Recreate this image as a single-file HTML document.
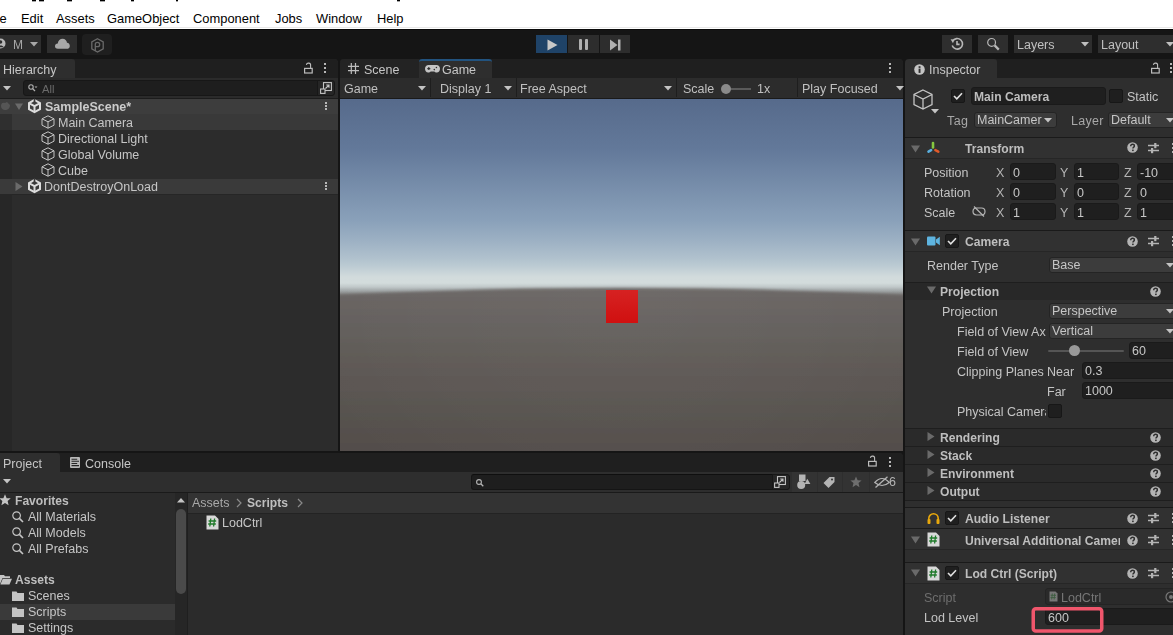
<!DOCTYPE html>
<html><head><meta charset="utf-8">
<style>
*{box-sizing:border-box;margin:0;padding:0}
html,body{width:1173px;height:635px;overflow:hidden;background:#151515;font-family:"Liberation Sans",sans-serif;font-size:12px;color:#c6c6c6}
.a{position:absolute}
.t{position:absolute;white-space:nowrap;line-height:16px;font-size:12.5px;padding-top:1px}
svg{position:absolute;overflow:visible}
#menu{left:0;top:0;width:1173px;height:29px;background:#fff}
#menu .t{color:#000;font-size:12.9px;top:9.5px}
.bk{position:absolute;background:#000;top:0;height:1px;box-shadow:0 1px 0 rgba(0,0,0,.35)}
</style></head><body>
<!-- MENU BAR -->
<div id="menu" class="a">
  <div class="a" style="left:0;top:27px;width:1173px;height:1px;background:#e8e8e8"></div><div class="a" style="left:0;top:29px;width:1173px;height:1px;background:#0a0a0a"></div>
  <div class="bk" style="left:32px;width:4px"></div>
  <div class="bk" style="left:39px;width:5px"></div>
  <div class="bk" style="left:67px;width:5px"></div>
  <div class="bk" style="left:100px;width:5px"></div>
  <div class="bk" style="left:131px;width:3px"></div>
  <div class="bk" style="left:176px;width:2px"></div>
  <div class="bk" style="left:397px;width:3px"></div>
  <div class="t" style="left:-14px">File</div>
  <div class="t" style="left:21px">Edit</div>
  <div class="t" style="left:56px">Assets</div>
  <div class="t" style="left:107px">GameObject</div>
  <div class="t" style="left:193px">Component</div>
  <div class="t" style="left:275px">Jobs</div>
  <div class="t" style="left:316px">Window</div>
  <div class="t" style="left:377px">Help</div>
</div>
<div id="ui" style="position:absolute;left:0;top:0;width:1173px;height:635px;will-change:transform">
<!-- TOOLBAR -->
<div class="a" style="left:0;top:35px;width:41px;height:18px;background:#2e2e2e"></div>
<svg style="left:-5px;top:38px" width="11" height="11" viewBox="0 0 11 11"><circle cx="5.5" cy="5.5" r="5" fill="#b8b8b8"/><circle cx="5.5" cy="4" r="1.8" fill="#2e2e2e"/><path d="M2.3 9.2 C3 7 8 7 8.7 9.2" fill="#2e2e2e"/></svg>
<div class="t" style="left:13px;top:36px;color:#a8a8a8;font-size:12px">M</div>
<svg style="left:30px;top:42px" width="8" height="5"><path d="M0 0H8L4 4.5Z" fill="#a8a8a8"/></svg>
<div class="a" style="left:47px;top:35px;width:30px;height:18px;background:#2e2e2e"></div>
<svg style="left:55px;top:38px" width="15" height="11" viewBox="0 0 15 11"><path d="M3 10.8 C0.8 10.8 0 9.4 0 8.2 C0 6.6 1.3 5.5 2.8 5.6 C3 2.6 5.2 0.8 7.6 0.8 C10 0.8 11.8 2.6 12 4.8 C13.8 5 14.8 6.4 14.8 7.9 C14.8 9.6 13.6 10.8 11.8 10.8Z" fill="#a8a8a8"/></svg>
<div class="a" style="left:82px;top:34px;width:30px;height:21px;background:#1f1f1f;border-radius:4px"></div>
<svg style="left:91px;top:38px" width="13" height="15" viewBox="0 0 13 15"><path d="M6.5 0.8 L12.2 4 V10.8 L6.5 14 L0.8 10.8 V4 Z" fill="none" stroke="#6a6a6a" stroke-width="1.3"/><path d="M4.3 13 V6.2 C4.3 5 5.3 4.3 6.5 4.3 C7.8 4.3 8.7 5.2 8.7 6.5 C8.7 7.8 7.8 8.7 6.5 8.7 H4.3" fill="none" stroke="#6a6a6a" stroke-width="1.3"/></svg>

<div class="a" style="left:536px;top:35px;width:31px;height:18px;background:#1f4368"></div>
<svg style="left:547px;top:39px" width="11" height="12"><path d="M0.5 0.5 L10.5 6 L0.5 11.5Z" fill="#c8c8c8"/></svg>
<div class="a" style="left:568px;top:35px;width:31px;height:18px;background:#2d2d2d"></div>
<div class="a" style="left:579px;top:39px;width:3px;height:11px;background:#b0b0b0;border-radius:1px"></div>
<div class="a" style="left:585px;top:39px;width:3px;height:11px;background:#b0b0b0;border-radius:1px"></div>
<div class="a" style="left:600px;top:35px;width:30px;height:18px;background:#2d2d2d"></div>
<svg style="left:610px;top:39px" width="11" height="12"><path d="M0 0.5 L7.5 6 L0 11.5Z" fill="#b0b0b0"/><rect x="8" y="0.5" width="2.5" height="11" fill="#b0b0b0"/></svg>

<div class="a" style="left:942px;top:35px;width:30px;height:18px;background:#2e2e2e"></div>
<svg style="left:950px;top:37px" width="14" height="14" viewBox="0 0 14 14"><path d="M2.6 4.2 A5.3 5.3 0 1 1 2.2 8.6" fill="none" stroke="#b8b8b8" stroke-width="1.6"/><path d="M0.6 2.2 L4.4 2.4 L3 6.2 Z" fill="#b8b8b8"/><path d="M7 4 V7.4 H9.6" fill="none" stroke="#b8b8b8" stroke-width="1.6"/></svg>
<div class="a" style="left:978px;top:35px;width:30px;height:18px;background:#2e2e2e"></div>
<svg style="left:987px;top:38px" width="13" height="13" viewBox="0 0 13 13"><circle cx="4.6" cy="4.4" r="3.9" fill="none" stroke="#b8b8b8" stroke-width="1.2"/><path d="M7.6 7.4 L11.8 11.6" stroke="#b8b8b8" stroke-width="2.2"/></svg>
<div class="a" style="left:1014px;top:35px;width:78px;height:18px;background:#2e2e2e"></div>
<div class="t" style="left:1017px;top:36px;color:#c0c0c0">Layers</div>
<svg style="left:1081px;top:42px" width="8" height="5"><path d="M0 0H8L4 4.5Z" fill="#c0c0c0"/></svg>
<div class="a" style="left:1098px;top:35px;width:80px;height:18px;background:#2e2e2e"></div>
<div class="t" style="left:1101px;top:36px;color:#c0c0c0">Layout</div>
<svg style="left:1166px;top:42px" width="8" height="5"><path d="M0 0H8L4 4.5Z" fill="#c0c0c0"/></svg>
<!-- HIERARCHY -->
<div class="a" style="left:0;top:59px;width:338px;height:392px;background:#2c2c2c;border-radius:0 4px 0 0;overflow:hidden">
  <div class="a" style="left:0;top:0;width:338px;height:19px;background:#1f1f1f"></div>
  <div class="a" style="left:0;top:0;width:75px;height:19px;background:#2e2e2e;border-radius:0 3px 0 0"></div>
  <div class="t" style="left:3px;top:2px;color:#c6c6c6">Hierarchy</div>
  <div class="a" style="left:0;top:19px;width:338px;height:20px;background:#2b2b2b"></div>
</div>
<svg style="left:304px;top:63px" width="9" height="11" viewBox="0 0 9 11"><path d="M6.6 5 V2.6 A2.1 2.1 0 0 0 2.4 1.9" fill="none" stroke="#bcbcbc" stroke-width="1.1"/><rect x="0.6" y="5.4" width="7.6" height="4.6" fill="none" stroke="#bcbcbc" stroke-width="1.2"/></svg>
<div class="a" style="left:324px;top:63px;width:2px;height:2px;background:#b8b8b8;box-shadow:0 4px 0 #b8b8b8,0 8px 0 #b8b8b8"></div>
<svg style="left:3px;top:86px" width="8" height="5"><path d="M0 0H8L4 4.5Z" fill="#c4c4c4"/></svg>
<div class="a" style="left:23px;top:80px;width:295px;height:16px;background:#1e1e1e;border:1px solid #171717;border-radius:3px 0 0 3px"></div>
<svg style="left:28px;top:84px" width="10" height="9" viewBox="0 0 10 9"><circle cx="3" cy="3" r="2.2" fill="none" stroke="#b0b0b0" stroke-width="1.1"/><path d="M4.6 4.6 L7 7" stroke="#b0b0b0" stroke-width="1.3"/><path d="M6.5 2.5 H9.5 L8 4Z" fill="#b0b0b0"/></svg>
<div class="t" style="left:42px;top:80px;color:#6a6a6a;font-size:11.2px">All</div>
<div class="a" style="left:317px;top:80px;width:18px;height:16px;background:#262626;border:1px solid #171717;border-radius:0 3px 3px 0"></div>
<svg style="left:320px;top:82px" width="12" height="12" viewBox="0 0 12 12"><rect x="3.5" y="0.6" width="7.9" height="7.9" fill="none" stroke="#c4c4c4" stroke-width="1.1"/><rect x="0.6" y="7" width="4.4" height="4.4" fill="#262626" stroke="#c4c4c4" stroke-width="1.1"/><path d="M5.5 6.5 L9 3 M6.2 3 H9 V5.8" fill="none" stroke="#c4c4c4" stroke-width="1.1"/></svg>
<!-- rows -->
<div class="a" style="left:0;top:98px;width:338px;height:1px;background:#1c1c1c"></div><div class="a" style="left:0;top:99px;width:338px;height:15px;background:#3d3d3d"></div>
<div class="a" style="left:0;top:114px;width:12px;height:65px;background:#272727"></div><div class="a" style="left:0;top:114px;width:12px;height:16px;background:#2f2f2f"></div>
<div class="a" style="left:12px;top:114px;width:326px;height:16px;background:#393939"></div><div class="a" style="left:0;top:194px;width:338px;height:1px;background:#262626"></div>
<div class="a" style="left:0;top:179px;width:338px;height:15px;background:#3a3a3a"></div>
<div class="a" style="left:0;top:194px;width:12px;height:257px;background:#272727"></div>

<svg style="left:0px;top:101px" width="11" height="10" viewBox="0 0 11 10"><path d="M1 5 C1 2 3 1 5 2 L7 1 L10 4 C10 7 8 9 5 9 C3 9 1 7.5 1 5Z" fill="#555"/></svg>
<svg style="left:15px;top:103px" width="8" height="8"><path d="M0 0.5H8L4 7Z" fill="#6a6a6a"/></svg>
<svg style="left:28px;top:99px" width="13" height="14" viewBox="0 0 13 14"><path d="M6.5 1 L12 4.1 V10.2 L6.5 13.2 L1 10.2 V4.1Z" fill="none" stroke="#dcdcdc" stroke-width="2"/><path d="M6.5 7.2 V13 M6.5 7.2 L1.8 4.6 M6.5 7.2 L11.2 4.6" stroke="#dcdcdc" stroke-width="2"/><rect x="5.7" y="0" width="1.6" height="3.6" fill="#3a3a3a"/></svg>
<div class="t" style="left:45px;top:98px;font-weight:bold;color:#cccccc">SampleScene*</div>
<div class="a" style="left:325px;top:102px;width:2px;height:2px;background:#b8b8b8;box-shadow:0 3px 0 #b8b8b8,0 6px 0 #b8b8b8"></div>
<svg style="left:41px;top:115px" width="14" height="14" viewBox="0 0 14 14"><path d="M7 0.8 L13 3.8 V10.2 L7 13.2 L1 10.2 V3.8Z M1 3.8 L7 6.8 L13 3.8 M7 6.8 V13.2" fill="none" stroke="#c4c4c4" stroke-width="1"/></svg><div class="t" style="left:58px;top:114px;color:#c6c6c6">Main Camera</div>
<svg style="left:41px;top:131px" width="14" height="14" viewBox="0 0 14 14"><path d="M7 0.8 L13 3.8 V10.2 L7 13.2 L1 10.2 V3.8Z M1 3.8 L7 6.8 L13 3.8 M7 6.8 V13.2" fill="none" stroke="#c4c4c4" stroke-width="1"/></svg><div class="t" style="left:58px;top:130px;color:#c6c6c6">Directional Light</div>
<svg style="left:41px;top:147px" width="14" height="14" viewBox="0 0 14 14"><path d="M7 0.8 L13 3.8 V10.2 L7 13.2 L1 10.2 V3.8Z M1 3.8 L7 6.8 L13 3.8 M7 6.8 V13.2" fill="none" stroke="#c4c4c4" stroke-width="1"/></svg><div class="t" style="left:58px;top:146px;color:#c6c6c6">Global Volume</div>
<svg style="left:41px;top:163px" width="14" height="14" viewBox="0 0 14 14"><path d="M7 0.8 L13 3.8 V10.2 L7 13.2 L1 10.2 V3.8Z M1 3.8 L7 6.8 L13 3.8 M7 6.8 V13.2" fill="none" stroke="#c4c4c4" stroke-width="1"/></svg><div class="t" style="left:58px;top:162px;color:#c6c6c6">Cube</div>
<svg style="left:15px;top:182px" width="8" height="9"><path d="M0.5 0V9L7.5 4.5Z" fill="#6a6a6a"/></svg>
<svg style="left:28px;top:179px" width="13" height="14" viewBox="0 0 13 14"><path d="M6.5 1 L12 4.1 V10.2 L6.5 13.2 L1 10.2 V4.1Z" fill="none" stroke="#dcdcdc" stroke-width="2"/><path d="M6.5 7.2 V13 M6.5 7.2 L1.8 4.6 M6.5 7.2 L11.2 4.6" stroke="#dcdcdc" stroke-width="2"/><rect x="5.7" y="0" width="1.6" height="3.6" fill="#3a3a3a"/></svg>
<div class="t" style="left:44px;top:178px;color:#c6c6c6">DontDestroyOnLoad</div>
<div class="a" style="left:325px;top:182px;width:2px;height:2px;background:#b8b8b8;box-shadow:0 3px 0 #b8b8b8,0 6px 0 #b8b8b8"></div>
<!-- SCENE/GAME -->
<div class="a" style="left:340px;top:59px;width:563px;height:392px;background:#2b2b2b;border-radius:4px 4px 0 0;overflow:hidden">
  <div class="a" style="left:0;top:0;width:563px;height:19px;background:#1f1f1f"></div>
  <div class="a" style="left:0;top:0;width:79px;height:19px;background:#232323"></div>
  <div class="a" style="left:79px;top:0;width:73px;height:19px;background:#2e2e2e;border-top:2px solid #22537f;border-radius:3px 3px 0 0"></div>
  <div class="a" style="left:0;top:19px;width:563px;height:21px;background:#2c2c2c;border-bottom:1px solid #1a1a1a"></div>
  <div class="a" style="left:90px;top:19px;width:1px;height:19px;background:#1e1e1e"></div>
  <div class="a" style="left:176px;top:19px;width:1px;height:19px;background:#1e1e1e"></div>
  <div class="a" style="left:336px;top:19px;width:1px;height:19px;background:#1e1e1e"></div>
  <div class="a" style="left:457px;top:19px;width:1px;height:19px;background:#1e1e1e"></div>
</div>
<svg style="left:348px;top:63px" width="11" height="11" viewBox="0 0 11 11"><path d="M3.3 0 V11 M7.5 0 V11 M0 3.3 H11 M0 7.7 H11" stroke="#bcbcbc" stroke-width="1.2"/></svg>
<div class="t" style="left:364px;top:61px;color:#c6c6c6">Scene</div>
<svg style="left:425px;top:65px" width="15" height="8" viewBox="0 0 15 8"><path d="M3.6 0 H11.4 C13.5 0 15 1.6 15 3.8 C15 6.2 13.6 7.6 11.8 7.6 C10.6 7.6 9.9 6.9 9.4 6.4 H5.6 C5.1 6.9 4.4 7.6 3.2 7.6 C1.4 7.6 0 6.2 0 3.8 C0 1.6 1.5 0 3.6 0Z" fill="#c4c4c4"/><path d="M2.3 3.6 H5.3 M3.8 2.1 V5.1" stroke="#2e2e2e" stroke-width="1.1"/><circle cx="11.4" cy="2.5" r="0.8" fill="#2e2e2e"/><circle cx="9.3" cy="4.6" r="0.8" fill="#2e2e2e"/></svg>
<div class="t" style="left:442px;top:61px;color:#c6c6c6">Game</div>
<div class="a" style="left:889px;top:63px;width:2px;height:2px;background:#b8b8b8;box-shadow:0 4px 0 #b8b8b8,0 8px 0 #b8b8b8"></div>
<div class="t" style="left:344px;top:80px;color:#c0c0c0">Game</div>
<svg style="left:418px;top:86px" width="8" height="5"><path d="M0 0H8L4 4.5Z" fill="#c4c4c4"/></svg>
<div class="t" style="left:440px;top:80px;color:#c0c0c0">Display 1</div>
<svg style="left:504px;top:86px" width="8" height="5"><path d="M0 0H8L4 4.5Z" fill="#c4c4c4"/></svg>
<div class="t" style="left:520px;top:80px;color:#c0c0c0">Free Aspect</div>
<svg style="left:664px;top:86px" width="8" height="5"><path d="M0 0H8L4 4.5Z" fill="#c4c4c4"/></svg>
<div class="t" style="left:683px;top:80px;color:#c0c0c0">Scale</div>
<div class="a" style="left:726px;top:88px;width:25px;height:2px;background:#5a5a5a"></div>
<div class="a" style="left:721px;top:84px;width:10px;height:10px;border-radius:50%;background:#8a8a8a"></div>
<div class="t" style="left:757px;top:80px;color:#c0c0c0">1x</div>
<div class="t" style="left:802px;top:80px;color:#c0c0c0">Play Focused</div>
<svg style="left:896px;top:86px" width="8" height="5"><path d="M0 0H8L4 4.5Z" fill="#c4c4c4"/></svg>
<svg style="left:340px;top:99px;overflow:hidden" width="563" height="352" viewBox="0 1 563 352" preserveAspectRatio="none">
<defs>
<linearGradient id="sky" gradientUnits="userSpaceOnUse" x1="0" y1="0" x2="0" y2="353"><stop offset="0.0000" stop-color="#566a8b"/><stop offset="0.1473" stop-color="#63799a"/><stop offset="0.3484" stop-color="#8aa1ba"/><stop offset="0.4051" stop-color="#9db1c4"/><stop offset="0.4533" stop-color="#b0c1cd"/><stop offset="0.4759" stop-color="#bccbd3"/><stop offset="0.4929" stop-color="#c8d4d8"/><stop offset="0.5071" stop-color="#d2dbdc"/><stop offset="0.5241" stop-color="#d3dcdc"/><stop offset="0.5354" stop-color="#c0c8c9"/><stop offset="0.5467" stop-color="#9fa4a5"/><stop offset="0.5581" stop-color="#7c7a79"/><stop offset="0.5694" stop-color="#686462"/><stop offset="0.7705" stop-color="#5d5854"/><stop offset="1.0000" stop-color="#524d4a"/></linearGradient>
<linearGradient id="gnd" x1="0" y1="0" x2="0" y2="1"><stop offset="0.0000" stop-color="#6a6664"/><stop offset="0.0455" stop-color="#686462"/><stop offset="0.3682" stop-color="#5d5854"/><stop offset="0.7364" stop-color="#524d4a"/></linearGradient>
<filter id="bl" x="-10%" y="-10%" width="120%" height="120%"><feGaussianBlur stdDeviation="1.6"/></filter>
</defs>
<rect x="0" y="0" width="563" height="353" fill="url(#sky)"/>
<ellipse cx="280" cy="302" rx="800" ry="112" fill="url(#gnd)" filter="url(#bl)"/><radialGradient id="rg" gradientUnits="userSpaceOnUse" cx="280" cy="200" r="330" gradientTransform="translate(280 200) scale(1 0.75) translate(-280 -200)"><stop offset="0" stop-color="#fff" stop-opacity="0.035"/><stop offset="0.6" stop-color="#fff" stop-opacity="0.018"/><stop offset="1" stop-color="#fff" stop-opacity="0"/></radialGradient><rect x="0" y="192" width="563" height="162" fill="url(#rg)"/>
</svg>
<div class="a" style="left:606px;top:290px;width:32px;height:33px;background:linear-gradient(#d62222,#d01010)"></div>
<!-- PROJECT -->
<div class="a" style="left:0;top:453px;width:903px;height:182px;background:#2b2b2b;border-radius:0 4px 0 0;overflow:hidden"><div class="a" style="left:0;top:0;width:903px;height:19px;background:#1f1f1f"></div><div class="a" style="left:0;top:0;width:60px;height:19px;background:#2e2e2e;border-radius:0 3px 0 0"></div><div class="a" style="left:0;top:19px;width:903px;height:21px;background:#2e2e2e;border-bottom:1px solid #1a1a1a"></div></div>
<div class="t" style="left:3px;top:455px;color:#c6c6c6">Project</div>
<svg style="left:70px;top:457px" width="10" height="11" viewBox="0 0 10 11"><rect x="0" y="0" width="10" height="11" rx="1" fill="#b8b8b8"/><path d="M1.5 2.2 H7.2 M1.5 4.3 H9 M1.5 6.5 H7.2 M1.5 8.6 H9" stroke="#262626" stroke-width="1.1"/></svg>
<div class="t" style="left:85px;top:455px;color:#c6c6c6">Console</div>
<svg style="left:3px;top:479px" width="8" height="5"><path d="M0 0H8L4 4.5Z" fill="#c4c4c4"/></svg>
<svg style="left:868px;top:456px" width="9" height="11" viewBox="0 0 9 11"><path d="M6.6 5 V2.6 A2.1 2.1 0 0 0 2.4 1.9" fill="none" stroke="#bcbcbc" stroke-width="1.1"/><rect x="0.6" y="5.4" width="7.6" height="4.6" fill="none" stroke="#bcbcbc" stroke-width="1.2"/></svg>
<div class="a" style="left:889px;top:457px;width:2px;height:2px;background:#b8b8b8;box-shadow:0 4px 0 #b8b8b8,0 8px 0 #b8b8b8"></div>
<div class="a" style="left:471px;top:474px;width:317px;height:16px;background:#1e1e1e;border:1px solid #151515;border-top-color:#0f0f0f;border-radius:3px 0 0 3px"></div>
<svg style="left:476px;top:479px" width="8" height="8" viewBox="0 0 8 8"><circle cx="3" cy="3" r="2.4" fill="none" stroke="#b4b4b4" stroke-width="1.1"/><path d="M4.8 4.8 L7.3 7.3" stroke="#b4b4b4" stroke-width="1.3"/></svg>
<div class="a" style="left:772px;top:474px;width:18px;height:16px;background:#262626;border:1px solid #171717;border-radius:0 3px 3px 0"></div>
<svg style="left:774px;top:476px" width="12" height="12" viewBox="0 0 12 12"><rect x="3.5" y="0.6" width="7.9" height="7.9" fill="none" stroke="#c4c4c4" stroke-width="1.1"/><rect x="0.6" y="7" width="4.4" height="4.4" fill="#262626" stroke="#c4c4c4" stroke-width="1.1"/><path d="M5.5 6.5 L9 3 M6.2 3 H9 V5.8" fill="none" stroke="#c4c4c4" stroke-width="1.1"/></svg>
<div class="a" style="left:792px;top:472px;width:25px;height:20px;background:#333333"></div>
<div class="a" style="left:818px;top:472px;width:24px;height:20px;background:#333333"></div>
<div class="a" style="left:843px;top:472px;width:26px;height:20px;background:#333333"></div>
<div class="a" style="left:870px;top:472px;width:33px;height:20px;background:#333333"></div>
<svg style="left:797px;top:474px" width="14" height="16" viewBox="0 0 14 16"><rect x="2" y="0.5" width="6.5" height="6.5" fill="#b4b4b4"/><circle cx="4.2" cy="11" r="4" fill="#b4b4b4"/><path d="M7.6 10 L10.3 4.8 L13.4 10Z" fill="#b4b4b4"/></svg>
<svg style="left:823px;top:476px" width="13" height="12" viewBox="0 0 13 12"><path d="M0.5 7 L6.5 1 H11.5 V6 L5.5 12Z" fill="#b4b4b4"/><circle cx="9" cy="3.5" r="1" fill="#333"/></svg>
<svg style="left:850px;top:476px" width="12" height="12" viewBox="0 0 12 12"><path d="M6 0.5 L7.6 4.2 L11.6 4.5 L8.5 7.1 L9.5 11.2 L6 9 L2.5 11.2 L3.5 7.1 L0.4 4.5 L4.4 4.2Z" fill="#6e6e6e"/></svg>
<svg style="left:874px;top:476px" width="16" height="12" viewBox="0 0 16 12"><path d="M0.8 6.5 Q8 -1.5 15.2 6.5 Q8 12.5 0.8 6.5Z" fill="none" stroke="#b4b4b4" stroke-width="1.2"/><path d="M1.5 11.5 L13.5 0.8" stroke="#b4b4b4" stroke-width="1.3"/></svg>
<div class="t" style="left:889px;top:473px;color:#b4b4b4">6</div>
<div class="a" style="left:903px;top:453px;width:2px;height:182px;background:#151515"></div>
<svg style="left:-1px;top:494px" width="12" height="12" viewBox="0 0 11 11"><path d="M5.5 0.3 L7 3.8 L10.8 4 L7.9 6.5 L8.8 10.4 L5.5 8.3 L2.2 10.4 L3.1 6.5 L0.2 4 L4 3.8Z" fill="#c4c4c4"/></svg>
<div class="t" style="left:15px;top:492px;color:#bebebe;font-weight:bold;font-size:12.1px">Favorites</div>
<svg style="left:12px;top:511px" width="12" height="12" viewBox="0 0 12 12"><circle cx="4.6" cy="4.6" r="3.8" fill="none" stroke="#c4c4c4" stroke-width="1.2"/><path d="M7.4 7.4 L11 11" stroke="#c4c4c4" stroke-width="1.6"/></svg><div class="t" style="left:28px;top:508px;color:#c6c6c6">All Materials</div>
<svg style="left:12px;top:527px" width="12" height="12" viewBox="0 0 12 12"><circle cx="4.6" cy="4.6" r="3.8" fill="none" stroke="#c4c4c4" stroke-width="1.2"/><path d="M7.4 7.4 L11 11" stroke="#c4c4c4" stroke-width="1.6"/></svg><div class="t" style="left:28px;top:524px;color:#c6c6c6">All Models</div>
<svg style="left:12px;top:543px" width="12" height="12" viewBox="0 0 12 12"><circle cx="4.6" cy="4.6" r="3.8" fill="none" stroke="#c4c4c4" stroke-width="1.2"/><path d="M7.4 7.4 L11 11" stroke="#c4c4c4" stroke-width="1.6"/></svg><div class="t" style="left:28px;top:540px;color:#c6c6c6">All Prefabs</div>
<div class="a" style="left:0;top:604px;width:175px;height:16px;background:#3a3a3a"></div>
<svg style="left:0px;top:574px" width="12" height="11" viewBox="0 0 12 11"><path d="M0 1 H4 L5 2.3 H10 V4 H2.5 L0 10Z" fill="#c4c4c4"/><path d="M2.8 4.8 H12 L9.5 10.5 H0.4Z" fill="#c4c4c4"/></svg>
<div class="t" style="left:15px;top:571px;color:#bebebe;font-weight:bold;font-size:12.1px">Assets</div>
<svg style="left:12px;top:591px" width="12" height="10" viewBox="0 0 12 10"><path d="M0 0.5 H4.5 L5.5 2 H12 V10 H0Z" fill="#c4c4c4"/></svg><div class="t" style="left:28px;top:587px;color:#c6c6c6">Scenes</div>
<svg style="left:12px;top:607px" width="12" height="10" viewBox="0 0 12 10"><path d="M0 0.5 H4.5 L5.5 2 H12 V10 H0Z" fill="#c4c4c4"/></svg><div class="t" style="left:28px;top:603px;color:#c6c6c6">Scripts</div>
<svg style="left:12px;top:623px" width="12" height="10" viewBox="0 0 12 10"><path d="M0 0.5 H4.5 L5.5 2 H12 V10 H0Z" fill="#c4c4c4"/></svg><div class="t" style="left:28px;top:619px;color:#c6c6c6">Settings</div>
<div class="a" style="left:175px;top:493px;width:12px;height:142px;background:#262626"></div>
<svg style="left:177px;top:498px" width="8" height="5"><path d="M0 4.5H8L4 0Z" fill="#c4c4c4"/></svg>
<div class="a" style="left:176px;top:509px;width:10px;height:85px;background:#4a4a4a;border-radius:5px"></div>
<div class="a" style="left:187px;top:493px;width:1px;height:142px;background:#1f1f1f"></div>
<div class="a" style="left:188px;top:493px;width:715px;height:21px;background:#333333;border-bottom:1px solid #232323"></div>
<div class="t" style="left:192px;top:494px;color:#a8a8a8">Assets</div>
<svg style="left:236px;top:498px" width="6" height="10"><path d="M1 1 L5 5 L1 9" fill="none" stroke="#8a8a8a" stroke-width="1.2"/></svg>
<div class="t" style="left:247px;top:494px;color:#bebebe;font-weight:bold;font-size:12.1px">Scripts</div>
<svg style="left:297px;top:498px" width="6" height="10"><path d="M1 1 L5 5 L1 9" fill="none" stroke="#8a8a8a" stroke-width="1.2"/></svg>
<svg style="left:206px;top:515px" width="13" height="15" viewBox="0 0 13 15"><path d="M0.5 0.5 H9 L12.5 4 V14.5 H0.5Z" fill="#d8d8d8"/><path d="M4.8 3.5 L3.8 11.5 M8.6 3.5 L7.6 11.5 M2.6 6 H10.2 M2.2 9 H9.8" stroke="#1f7a2a" stroke-width="1.3"/></svg>
<div class="t" style="left:222px;top:514px;color:#c6c6c6">LodCtrl</div>
<!-- INSPECTOR -->
<svg style="left:1170px;top:93px" width="8" height="5"><path d="M0 0H8L4 4.5Z" fill="#c4c4c4"/></svg>
<div class="a" style="left:905px;top:59px;width:268px;height:576px;background:#2e2e2e;border-radius:4px 0 0 0;overflow:hidden"><div class="a" style="left:0;top:0;width:268px;height:19px;background:#1f1f1f"></div><div class="a" style="left:0;top:0;width:92px;height:19px;background:#2e2e2e;border-radius:4px 3px 0 0"></div></div>
<svg style="left:914px;top:64px" width="11" height="11" viewBox="0 0 11 11"><circle cx="5.5" cy="5.5" r="5.3" fill="#c4c4c4"/><rect x="4.6" y="4.6" width="1.9" height="4.3" fill="#2e2e2e"/><rect x="4.6" y="2.2" width="1.9" height="1.7" fill="#2e2e2e"/></svg>
<div class="t" style="left:929px;top:61px;color:#c6c6c6">Inspector</div>
<svg style="left:1151px;top:63px" width="9" height="11" viewBox="0 0 9 11"><path d="M6.6 5 V2.6 A2.1 2.1 0 0 0 2.4 1.9" fill="none" stroke="#bcbcbc" stroke-width="1.1"/><rect x="0.6" y="5.4" width="7.6" height="4.6" fill="none" stroke="#bcbcbc" stroke-width="1.2"/></svg>
<div class="a" style="left:1170px;top:63px;width:2px;height:2px;background:#b8b8b8;box-shadow:0 4px 0 #b8b8b8,0 8px 0 #b8b8b8"></div>
<svg style="left:913px;top:89px" width="20" height="21" viewBox="0 0 20 21"><path d="M10 1 L19 5.5 V15.5 L10 20 L1 15.5 V5.5Z M1 5.5 L10 10 L19 5.5 M10 10 V20" fill="none" stroke="#c4c4c4" stroke-width="1.3"/></svg><svg style="left:931px;top:109px" width="8" height="5"><path d="M0 0H8L4 4.5Z" fill="#c4c4c4"/></svg>
<div class="a" style="left:951px;top:89px;width:14px;height:14px;background:#1f1f1f;border:1px solid #171717;border-radius:2px"></div><svg style="left:953px;top:92px" width="10" height="8"><path d="M1 4 L3.8 6.8 L9 1.2" fill="none" stroke="#e0e0e0" stroke-width="1.6"/></svg>
<div class="a" style="left:971px;top:87px;width:135px;height:18px;background:#1f1f1f;border:1px solid #1a1a1a;border-radius:3px"></div>
<div class="t" style="left:974px;top:88px;color:#bebebe;font-weight:bold;font-size:12.1px">Main Camera</div>
<div class="a" style="left:1109px;top:89px;width:14px;height:14px;background:#1f1f1f;border:1px solid #171717;border-radius:2px"></div>
<div class="t" style="left:1127px;top:88px;color:#c4c4c4">Static</div>
<div class="t" style="left:947px;top:112px;color:#a8a8a8;letter-spacing:0.4px">Tag</div>
<div class="a" style="left:974px;top:112px;width:83px;height:16px;background:#3c3c3c;border:1px solid #242424;border-radius:3px"></div><div class="t" style="left:977px;top:111px;color:#c6c6c6">MainCamer</div><svg style="left:1044px;top:118px" width="8" height="5"><path d="M0 0H8L4 4.5Z" fill="#c4c4c4"/></svg>
<div class="t" style="left:1071px;top:112px;color:#a8a8a8;letter-spacing:0.3px">Layer</div>
<div class="a" style="left:1108px;top:112px;width:80px;height:16px;background:#3c3c3c;border:1px solid #242424;border-radius:3px"></div><div class="t" style="left:1111px;top:111px;color:#c6c6c6">Default</div><svg style="left:1166px;top:118px" width="8" height="5"><path d="M0 0H8L4 4.5Z" fill="#c4c4c4"/></svg>
<div class="a" style="left:905px;top:137px;width:268px;height:1px;background:#1a1a1a"></div><div class="a" style="left:905px;top:138px;width:268px;height:20px;background:#313131"></div><div class="a" style="left:905px;top:158px;width:268px;height:1px;background:#262626"></div>
<svg style="left:911px;top:145px" width="9" height="8"><path d="M0 0.5H9L4.5 7.5Z" fill="#6a6a6a"/></svg>
<svg style="left:927px;top:141px" width="14" height="13" viewBox="0 0 14 13"><path d="M6 2 V6.4" stroke="#86c840" stroke-width="2.6" stroke-linecap="round"/><path d="M4.1 9.1 L1.5 10.6" stroke="#5ab0e0" stroke-width="2.6" stroke-linecap="round"/><path d="M8.4 9.1 L11.3 10.6" stroke="#e05a2a" stroke-width="2.6" stroke-linecap="round"/></svg>
<div class="t" style="left:965px;top:140px;color:#bebebe;font-weight:bold;font-size:12.1px">Transform</div>
<svg style="left:1127px;top:142px" width="11" height="11" viewBox="0 0 11 11"><circle cx="5.5" cy="5.5" r="5.3" fill="#b4b4b4"/><path d="M3.7 4.2 C3.7 2.9 4.5 2.3 5.5 2.3 C6.6 2.3 7.4 3 7.4 3.9 C7.4 5.1 5.9 5.2 5.9 6.6" fill="none" stroke="#2e2e2e" stroke-width="1.4"/><rect x="5.1" y="7.6" width="1.6" height="1.5" fill="#2e2e2e"/></svg><svg style="left:1148px;top:143px" width="11" height="11" viewBox="0 0 11 11"><path d="M0 2.6 H11 M0 7.6 H11" stroke="#b4b4b4" stroke-width="1.5"/><rect x="6.2" y="0" width="2.2" height="5.2" fill="#b4b4b4"/><rect x="3" y="5" width="2.2" height="5.2" fill="#b4b4b4"/></svg><div class="a" style="left:1172px;top:143px;width:2px;height:2px;background:#b4b4b4;box-shadow:0 4px 0 #b4b4b4,0 8px 0 #b4b4b4"></div>
<div class="t" style="left:924px;top:164px;color:#c4c4c4">Position</div>
<div class="t" style="left:996px;top:164px;color:#b4b4b4">X</div><div class="a" style="left:1010px;top:163px;width:46px;height:17px;background:#1f1f1f;border:1px solid #1a1a1a;border-radius:3px"></div><div class="t" style="left:1013px;top:164px;color:#c6c6c6">0</div>
<div class="t" style="left:1060px;top:164px;color:#b4b4b4">Y</div><div class="a" style="left:1074px;top:163px;width:45px;height:17px;background:#1f1f1f;border:1px solid #1a1a1a;border-radius:3px"></div><div class="t" style="left:1077px;top:164px;color:#c6c6c6">1</div>
<div class="t" style="left:1124px;top:164px;color:#b4b4b4">Z</div><div class="a" style="left:1137px;top:163px;width:50px;height:17px;background:#1f1f1f;border:1px solid #1a1a1a;border-radius:3px"></div><div class="t" style="left:1140px;top:164px;color:#c6c6c6">-10</div>
<div class="t" style="left:924px;top:184px;color:#c4c4c4">Rotation</div>
<div class="t" style="left:996px;top:184px;color:#b4b4b4">X</div><div class="a" style="left:1010px;top:183px;width:46px;height:17px;background:#1f1f1f;border:1px solid #1a1a1a;border-radius:3px"></div><div class="t" style="left:1013px;top:184px;color:#c6c6c6">0</div>
<div class="t" style="left:1060px;top:184px;color:#b4b4b4">Y</div><div class="a" style="left:1074px;top:183px;width:45px;height:17px;background:#1f1f1f;border:1px solid #1a1a1a;border-radius:3px"></div><div class="t" style="left:1077px;top:184px;color:#c6c6c6">0</div>
<div class="t" style="left:1124px;top:184px;color:#b4b4b4">Z</div><div class="a" style="left:1137px;top:183px;width:50px;height:17px;background:#1f1f1f;border:1px solid #1a1a1a;border-radius:3px"></div><div class="t" style="left:1140px;top:184px;color:#c6c6c6">0</div>
<div class="t" style="left:924px;top:204px;color:#c4c4c4">Scale</div>
<div class="t" style="left:996px;top:204px;color:#b4b4b4">X</div><div class="a" style="left:1010px;top:203px;width:46px;height:17px;background:#1f1f1f;border:1px solid #1a1a1a;border-radius:3px"></div><div class="t" style="left:1013px;top:204px;color:#c6c6c6">1</div>
<div class="t" style="left:1060px;top:204px;color:#b4b4b4">Y</div><div class="a" style="left:1074px;top:203px;width:45px;height:17px;background:#1f1f1f;border:1px solid #1a1a1a;border-radius:3px"></div><div class="t" style="left:1077px;top:204px;color:#c6c6c6">1</div>
<div class="t" style="left:1124px;top:204px;color:#b4b4b4">Z</div><div class="a" style="left:1137px;top:203px;width:50px;height:17px;background:#1f1f1f;border:1px solid #1a1a1a;border-radius:3px"></div><div class="t" style="left:1140px;top:204px;color:#c6c6c6">1</div>
<svg style="left:972px;top:206px" width="14" height="11" viewBox="0 0 14 11"><path d="M4.5 2 H9.5 C11.5 2 13 3.5 13 5.5 C13 7.5 11.5 9 9.5 9 H4.5 C2.5 9 1 7.5 1 5.5 C1 3.5 2.5 2 4.5 2Z" fill="none" stroke="#b4b4b4" stroke-width="1.2"/><path d="M2 0.5 L12 10.5" stroke="#b4b4b4" stroke-width="1.2"/></svg>
<div class="a" style="left:905px;top:230px;width:268px;height:1px;background:#1a1a1a"></div><div class="a" style="left:905px;top:231px;width:268px;height:20px;background:#313131"></div><div class="a" style="left:905px;top:251px;width:268px;height:1px;background:#262626"></div>
<svg style="left:911px;top:238px" width="9" height="8"><path d="M0 0.5H9L4.5 7.5Z" fill="#6a6a6a"/></svg>
<svg style="left:927px;top:236px" width="13" height="10" viewBox="0 0 13 10"><rect x="0" y="0.5" width="8.5" height="9" rx="1" fill="#5eb4e0"/><path d="M9 3.5 L12.8 0.8 V9.2 L9 6.5Z" fill="#5eb4e0"/></svg>
<div class="a" style="left:945px;top:234px;width:14px;height:14px;background:#1f1f1f;border:1px solid #171717;border-radius:2px"></div><svg style="left:947px;top:237px" width="10" height="8"><path d="M1 4 L3.8 6.8 L9 1.2" fill="none" stroke="#e0e0e0" stroke-width="1.6"/></svg>
<div class="t" style="left:965px;top:233px;color:#bebebe;font-weight:bold;font-size:12.1px">Camera</div>
<svg style="left:1127px;top:236px" width="11" height="11" viewBox="0 0 11 11"><circle cx="5.5" cy="5.5" r="5.3" fill="#b4b4b4"/><path d="M3.7 4.2 C3.7 2.9 4.5 2.3 5.5 2.3 C6.6 2.3 7.4 3 7.4 3.9 C7.4 5.1 5.9 5.2 5.9 6.6" fill="none" stroke="#2e2e2e" stroke-width="1.4"/><rect x="5.1" y="7.6" width="1.6" height="1.5" fill="#2e2e2e"/></svg><svg style="left:1148px;top:236px" width="11" height="11" viewBox="0 0 11 11"><path d="M0 2.6 H11 M0 7.6 H11" stroke="#b4b4b4" stroke-width="1.5"/><rect x="6.2" y="0" width="2.2" height="5.2" fill="#b4b4b4"/><rect x="3" y="5" width="2.2" height="5.2" fill="#b4b4b4"/></svg><div class="a" style="left:1172px;top:236px;width:2px;height:2px;background:#b4b4b4;box-shadow:0 4px 0 #b4b4b4,0 8px 0 #b4b4b4"></div>
<div class="t" style="left:927px;top:257px;color:#c4c4c4">Render Type</div>
<div class="a" style="left:1049px;top:257px;width:130px;height:16px;background:#3c3c3c;border:1px solid #242424;border-radius:3px"></div><div class="t" style="left:1052px;top:256px;color:#c6c6c6">Base</div><svg style="left:1166px;top:263px" width="8" height="5"><path d="M0 0H8L4 4.5Z" fill="#c4c4c4"/></svg>
<div class="a" style="left:905px;top:282px;width:268px;height:1px;background:#1e1e1e"></div><div class="a" style="left:905px;top:283px;width:268px;height:17px;background:#282828"></div>
<svg style="left:927px;top:286px" width="9" height="8"><path d="M0 0.5H9L4.5 7.5Z" fill="#6a6a6a"/></svg>
<div class="t" style="left:940px;top:283px;color:#bebebe;font-weight:bold;font-size:12.1px">Projection</div>
<svg style="left:1150px;top:286px" width="11" height="11" viewBox="0 0 11 11"><circle cx="5.5" cy="5.5" r="5.3" fill="#b4b4b4"/><path d="M3.7 4.2 C3.7 2.9 4.5 2.3 5.5 2.3 C6.6 2.3 7.4 3 7.4 3.9 C7.4 5.1 5.9 5.2 5.9 6.6" fill="none" stroke="#2e2e2e" stroke-width="1.4"/><rect x="5.1" y="7.6" width="1.6" height="1.5" fill="#2e2e2e"/></svg>
<div class="t" style="left:942px;top:303px;color:#c4c4c4">Projection</div>
<div class="a" style="left:1049px;top:303px;width:130px;height:16px;background:#3c3c3c;border:1px solid #242424;border-radius:3px"></div><div class="t" style="left:1052px;top:302px;color:#c6c6c6">Perspective</div><svg style="left:1166px;top:309px" width="8" height="5"><path d="M0 0H8L4 4.5Z" fill="#c4c4c4"/></svg>
<div class="a" style="left:957px;top:323px;width:89px;height:17px;overflow:hidden"><div class="t" style="left:0px;top:0px;color:#c4c4c4">Field of View Axis</div></div>
<div class="a" style="left:1049px;top:323px;width:130px;height:16px;background:#3c3c3c;border:1px solid #242424;border-radius:3px"></div><div class="t" style="left:1052px;top:322px;color:#c6c6c6">Vertical</div><svg style="left:1166px;top:329px" width="8" height="5"><path d="M0 0H8L4 4.5Z" fill="#c4c4c4"/></svg>
<div class="t" style="left:957px;top:343px;color:#c4c4c4">Field of View</div>
<div class="a" style="left:1048px;top:350px;width:76px;height:2px;background:#555;border-radius:1px"></div><div class="a" style="left:1069px;top:345px;width:11px;height:11px;border-radius:50%;background:#999"></div>
<div class="a" style="left:1129px;top:342px;width:50px;height:17px;background:#1f1f1f;border:1px solid #1a1a1a;border-radius:3px"></div><div class="t" style="left:1132px;top:342px;color:#c6c6c6">60</div>
<div class="t" style="left:957px;top:363px;color:#c4c4c4">Clipping Planes</div><div class="t" style="left:1047px;top:363px;color:#c4c4c4">Near</div>
<div class="a" style="left:1082px;top:362px;width:97px;height:17px;background:#1f1f1f;border:1px solid #1a1a1a;border-radius:3px"></div><div class="t" style="left:1085px;top:362px;color:#c6c6c6">0.3</div>
<div class="t" style="left:1047px;top:383px;color:#c4c4c4">Far</div>
<div class="a" style="left:1082px;top:382px;width:97px;height:17px;background:#1f1f1f;border:1px solid #1a1a1a;border-radius:3px"></div><div class="t" style="left:1085px;top:382px;color:#c6c6c6">1000</div>
<div class="a" style="left:957px;top:403px;width:89px;height:17px;overflow:hidden"><div class="t" style="left:0px;top:0px;color:#c4c4c4">Physical Camera</div></div>
<div class="a" style="left:1048px;top:404px;width:14px;height:14px;background:#1f1f1f;border:1px solid #171717;border-radius:2px"></div>
<div class="a" style="left:905px;top:428px;width:268px;height:1px;background:#1e1e1e"></div><div class="a" style="left:905px;top:429px;width:268px;height:17px;background:#2a2a2a"></div>
<svg style="left:927px;top:432px" width="8" height="9"><path d="M0.5 0V9L7.5 4.5Z" fill="#6a6a6a"/></svg>
<div class="t" style="left:940px;top:429px;color:#bebebe;font-weight:bold;font-size:12.1px">Rendering</div>
<svg style="left:1150px;top:432px" width="11" height="11" viewBox="0 0 11 11"><circle cx="5.5" cy="5.5" r="5.3" fill="#b4b4b4"/><path d="M3.7 4.2 C3.7 2.9 4.5 2.3 5.5 2.3 C6.6 2.3 7.4 3 7.4 3.9 C7.4 5.1 5.9 5.2 5.9 6.6" fill="none" stroke="#2e2e2e" stroke-width="1.4"/><rect x="5.1" y="7.6" width="1.6" height="1.5" fill="#2e2e2e"/></svg>
<div class="a" style="left:905px;top:446px;width:268px;height:1px;background:#1e1e1e"></div><div class="a" style="left:905px;top:447px;width:268px;height:17px;background:#2a2a2a"></div>
<svg style="left:927px;top:450px" width="8" height="9"><path d="M0.5 0V9L7.5 4.5Z" fill="#6a6a6a"/></svg>
<div class="t" style="left:940px;top:447px;color:#bebebe;font-weight:bold;font-size:12.1px">Stack</div>
<svg style="left:1150px;top:450px" width="11" height="11" viewBox="0 0 11 11"><circle cx="5.5" cy="5.5" r="5.3" fill="#b4b4b4"/><path d="M3.7 4.2 C3.7 2.9 4.5 2.3 5.5 2.3 C6.6 2.3 7.4 3 7.4 3.9 C7.4 5.1 5.9 5.2 5.9 6.6" fill="none" stroke="#2e2e2e" stroke-width="1.4"/><rect x="5.1" y="7.6" width="1.6" height="1.5" fill="#2e2e2e"/></svg>
<div class="a" style="left:905px;top:464px;width:268px;height:1px;background:#1e1e1e"></div><div class="a" style="left:905px;top:465px;width:268px;height:17px;background:#2a2a2a"></div>
<svg style="left:927px;top:468px" width="8" height="9"><path d="M0.5 0V9L7.5 4.5Z" fill="#6a6a6a"/></svg>
<div class="t" style="left:940px;top:465px;color:#bebebe;font-weight:bold;font-size:12.1px">Environment</div>
<svg style="left:1150px;top:468px" width="11" height="11" viewBox="0 0 11 11"><circle cx="5.5" cy="5.5" r="5.3" fill="#b4b4b4"/><path d="M3.7 4.2 C3.7 2.9 4.5 2.3 5.5 2.3 C6.6 2.3 7.4 3 7.4 3.9 C7.4 5.1 5.9 5.2 5.9 6.6" fill="none" stroke="#2e2e2e" stroke-width="1.4"/><rect x="5.1" y="7.6" width="1.6" height="1.5" fill="#2e2e2e"/></svg>
<div class="a" style="left:905px;top:482px;width:268px;height:1px;background:#1e1e1e"></div><div class="a" style="left:905px;top:483px;width:268px;height:17px;background:#2a2a2a"></div>
<svg style="left:927px;top:486px" width="8" height="9"><path d="M0.5 0V9L7.5 4.5Z" fill="#6a6a6a"/></svg>
<div class="t" style="left:940px;top:483px;color:#bebebe;font-weight:bold;font-size:12.1px">Output</div>
<svg style="left:1150px;top:486px" width="11" height="11" viewBox="0 0 11 11"><circle cx="5.5" cy="5.5" r="5.3" fill="#b4b4b4"/><path d="M3.7 4.2 C3.7 2.9 4.5 2.3 5.5 2.3 C6.6 2.3 7.4 3 7.4 3.9 C7.4 5.1 5.9 5.2 5.9 6.6" fill="none" stroke="#2e2e2e" stroke-width="1.4"/><rect x="5.1" y="7.6" width="1.6" height="1.5" fill="#2e2e2e"/></svg>
<div class="a" style="left:905px;top:500px;width:268px;height:1px;background:#1e1e1e"></div>
<div class="a" style="left:905px;top:507px;width:268px;height:1px;background:#1a1a1a"></div><div class="a" style="left:905px;top:508px;width:268px;height:20px;background:#313131"></div><div class="a" style="left:905px;top:528px;width:268px;height:1px;background:#1a1a1a"></div>
<svg style="left:927px;top:512px" width="13" height="12" viewBox="0 0 13 12"><path d="M1.8 10 V6.5 A4.7 4.7 0 0 1 11.2 6.5 V10" fill="none" stroke="#e8a80c" stroke-width="1.6"/><rect x="0.5" y="7" width="3" height="5" rx="1" fill="#e8a80c"/><rect x="9.5" y="7" width="3" height="5" rx="1" fill="#e8a80c"/></svg>
<div class="a" style="left:945px;top:511px;width:14px;height:14px;background:#1f1f1f;border:1px solid #171717;border-radius:2px"></div><svg style="left:947px;top:514px" width="10" height="8"><path d="M1 4 L3.8 6.8 L9 1.2" fill="none" stroke="#e0e0e0" stroke-width="1.6"/></svg>
<div class="t" style="left:965px;top:510px;color:#bebebe;font-weight:bold;font-size:12.1px">Audio Listener</div>
<svg style="left:1127px;top:513px" width="11" height="11" viewBox="0 0 11 11"><circle cx="5.5" cy="5.5" r="5.3" fill="#b4b4b4"/><path d="M3.7 4.2 C3.7 2.9 4.5 2.3 5.5 2.3 C6.6 2.3 7.4 3 7.4 3.9 C7.4 5.1 5.9 5.2 5.9 6.6" fill="none" stroke="#2e2e2e" stroke-width="1.4"/><rect x="5.1" y="7.6" width="1.6" height="1.5" fill="#2e2e2e"/></svg><svg style="left:1148px;top:513px" width="11" height="11" viewBox="0 0 11 11"><path d="M0 2.6 H11 M0 7.6 H11" stroke="#b4b4b4" stroke-width="1.5"/><rect x="6.2" y="0" width="2.2" height="5.2" fill="#b4b4b4"/><rect x="3" y="5" width="2.2" height="5.2" fill="#b4b4b4"/></svg><div class="a" style="left:1172px;top:513px;width:2px;height:2px;background:#b4b4b4;box-shadow:0 4px 0 #b4b4b4,0 8px 0 #b4b4b4"></div>
<div class="a" style="left:905px;top:529px;width:268px;height:20px;background:#313131"></div>
<svg style="left:911px;top:536px" width="9" height="8"><path d="M0 0.5H9L4.5 7.5Z" fill="#6a6a6a"/></svg>
<svg style="left:927px;top:532px" width="13" height="15" viewBox="0 0 13 15"><path d="M0.5 0.5 H9 L12.5 4 V14.5 H0.5Z" fill="#d8d8d8"/><path d="M4.8 3.5 L3.8 11.5 M8.6 3.5 L7.6 11.5 M2.6 6 H10.2 M2.2 9 H9.8" stroke="#1f7a2a" stroke-width="1.3"/></svg>
<div class="a" style="left:965px;top:532px;width:155px;height:17px;overflow:hidden"><div class="t" style="left:0px;top:0px;color:#bebebe;font-weight:bold;font-size:12.1px">Universal Additional Camera Data</div></div>
<svg style="left:1127px;top:535px" width="11" height="11" viewBox="0 0 11 11"><circle cx="5.5" cy="5.5" r="5.3" fill="#b4b4b4"/><path d="M3.7 4.2 C3.7 2.9 4.5 2.3 5.5 2.3 C6.6 2.3 7.4 3 7.4 3.9 C7.4 5.1 5.9 5.2 5.9 6.6" fill="none" stroke="#2e2e2e" stroke-width="1.4"/><rect x="5.1" y="7.6" width="1.6" height="1.5" fill="#2e2e2e"/></svg><svg style="left:1148px;top:535px" width="11" height="11" viewBox="0 0 11 11"><path d="M0 2.6 H11 M0 7.6 H11" stroke="#b4b4b4" stroke-width="1.5"/><rect x="6.2" y="0" width="2.2" height="5.2" fill="#b4b4b4"/><rect x="3" y="5" width="2.2" height="5.2" fill="#b4b4b4"/></svg><div class="a" style="left:1172px;top:535px;width:2px;height:2px;background:#b4b4b4;box-shadow:0 4px 0 #b4b4b4,0 8px 0 #b4b4b4"></div>
<div class="a" style="left:905px;top:549px;width:268px;height:1px;background:#262626"></div>
<div class="a" style="left:905px;top:562px;width:268px;height:1px;background:#1a1a1a"></div><div class="a" style="left:905px;top:563px;width:268px;height:20px;background:#313131"></div><div class="a" style="left:905px;top:583px;width:268px;height:1px;background:#262626"></div>
<svg style="left:911px;top:569px" width="9" height="8"><path d="M0 0.5H9L4.5 7.5Z" fill="#6a6a6a"/></svg>
<svg style="left:927px;top:566px" width="13" height="15" viewBox="0 0 13 15"><path d="M0.5 0.5 H9 L12.5 4 V14.5 H0.5Z" fill="#d8d8d8"/><path d="M4.8 3.5 L3.8 11.5 M8.6 3.5 L7.6 11.5 M2.6 6 H10.2 M2.2 9 H9.8" stroke="#1f7a2a" stroke-width="1.3"/></svg>
<div class="a" style="left:945px;top:566px;width:14px;height:14px;background:#1f1f1f;border:1px solid #171717;border-radius:2px"></div><svg style="left:947px;top:569px" width="10" height="8"><path d="M1 4 L3.8 6.8 L9 1.2" fill="none" stroke="#e0e0e0" stroke-width="1.6"/></svg>
<div class="t" style="left:965px;top:565px;color:#bebebe;font-weight:bold;font-size:12.1px">Lod Ctrl (Script)</div>
<svg style="left:1127px;top:568px" width="11" height="11" viewBox="0 0 11 11"><circle cx="5.5" cy="5.5" r="5.3" fill="#b4b4b4"/><path d="M3.7 4.2 C3.7 2.9 4.5 2.3 5.5 2.3 C6.6 2.3 7.4 3 7.4 3.9 C7.4 5.1 5.9 5.2 5.9 6.6" fill="none" stroke="#2e2e2e" stroke-width="1.4"/><rect x="5.1" y="7.6" width="1.6" height="1.5" fill="#2e2e2e"/></svg><svg style="left:1148px;top:568px" width="11" height="11" viewBox="0 0 11 11"><path d="M0 2.6 H11 M0 7.6 H11" stroke="#b4b4b4" stroke-width="1.5"/><rect x="6.2" y="0" width="2.2" height="5.2" fill="#b4b4b4"/><rect x="3" y="5" width="2.2" height="5.2" fill="#b4b4b4"/></svg><div class="a" style="left:1172px;top:568px;width:2px;height:2px;background:#b4b4b4;box-shadow:0 4px 0 #b4b4b4,0 8px 0 #b4b4b4"></div>
<div class="t" style="left:924px;top:589px;color:#6e6e6e">Script</div>
<div class="a" style="left:1045px;top:588px;width:134px;height:17px;background:#2a2a2a;border:1px solid #242424;border-radius:3px"></div>
<svg style="left:1049px;top:591px" width="9" height="11" viewBox="0 0 9 11"><path d="M0.5 0.5 H6.5 L8.5 2.5 V10.5 H0.5Z" fill="#777"/><path d="M3.3 2.5 L2.7 8.5 M5.7 2.5 L5.1 8.5 M1.7 4.3 H7 M1.5 6.6 H6.8" stroke="#3c5c40" stroke-width="0.9"/></svg>
<div class="t" style="left:1061px;top:589px;color:#777777">LodCtrl</div>
<svg style="left:1165px;top:591px" width="12" height="12" viewBox="0 0 12 12"><circle cx="6" cy="6" r="5" fill="none" stroke="#777" stroke-width="1.2"/><circle cx="6" cy="6" r="2" fill="#777"/></svg>
<div class="t" style="left:924px;top:609px;color:#c4c4c4">Lod Level</div>
<div class="a" style="left:1045px;top:608px;width:134px;height:17px;background:#1f1f1f;border:1px solid #1a1a1a;border-radius:3px"></div>
<div class="t" style="left:1048px;top:609px;color:#c6c6c6">600</div>
<svg style="left:1031px;top:606px" width="74" height="28"><rect x="2.25" y="2.75" width="68.5" height="22.25" rx="2.5" fill="none" stroke="#f0566c" stroke-width="3.5"/></svg>
</div>
</body></html>
